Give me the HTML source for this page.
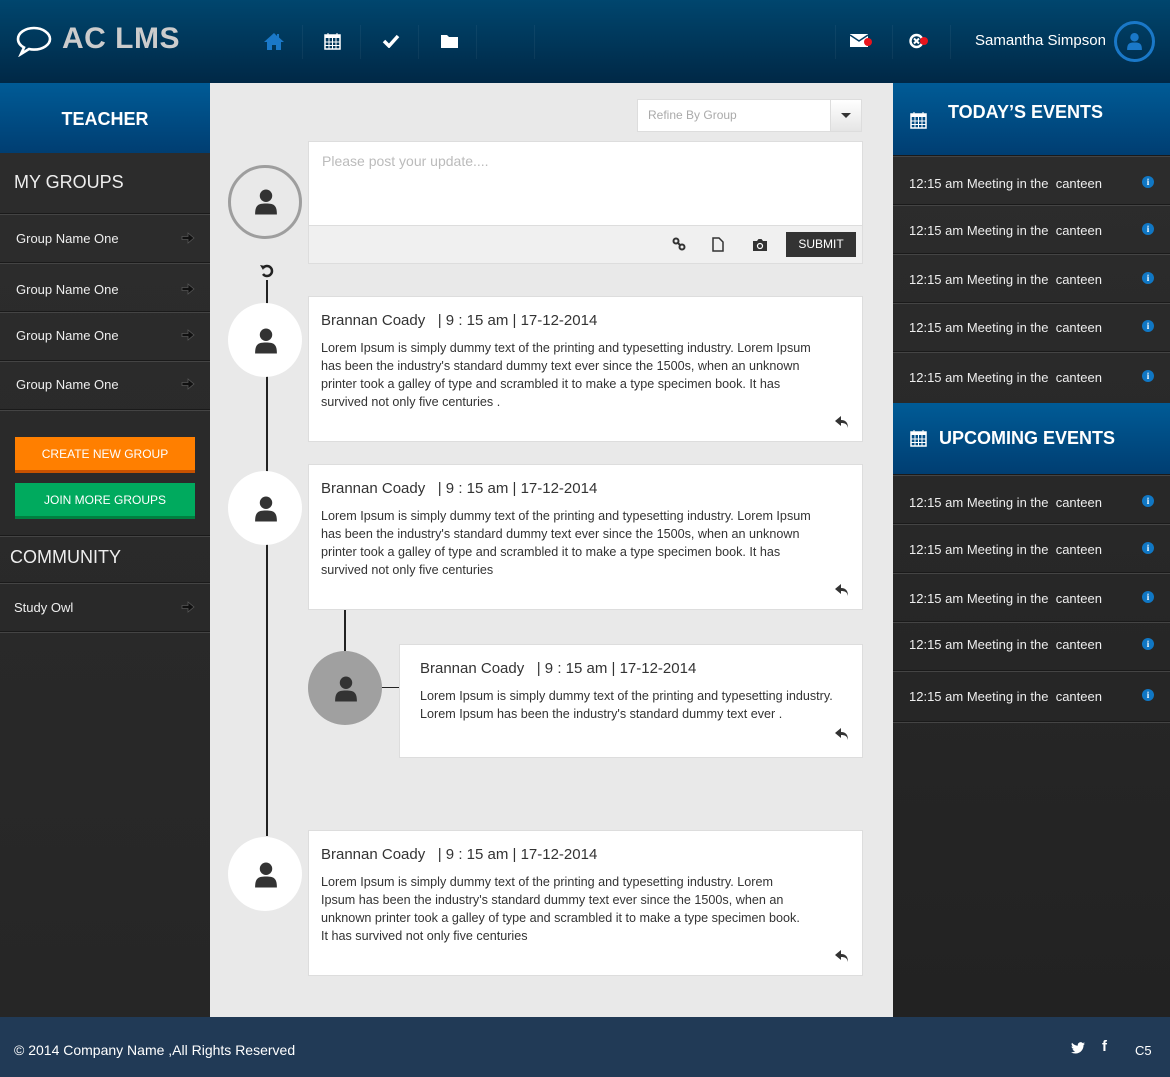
<!DOCTYPE html>
<html><head><meta charset="utf-8"><style>
*{margin:0;padding:0;box-sizing:border-box}
body{width:1170px;height:1077px;position:relative;overflow:hidden;font-family:"Liberation Sans",sans-serif;background:#e9e9e9}
.a{position:absolute}
#hdr{left:0;top:0;width:1170px;height:83px;background:linear-gradient(#00466e,#002846)}
.logo{left:62px;top:22px;font-size:30px;font-weight:bold;color:#ccc;letter-spacing:0.5px}
.nav{top:25px;width:58px;height:34px;border-right:1px solid rgba(255,255,255,0.05)}
#ls{left:0;top:83px;width:210px;height:934px;background:linear-gradient(#2d2d2d,#262626)}
.teach{left:0;top:83px;width:210px;height:70px;background:linear-gradient(#005b96,#003e72);color:#fff;font-weight:bold;font-size:18px;text-align:center;line-height:72px}
.sep{height:2px;background:#1a1a1a;border-bottom:1px solid #444;width:210px;left:0}
.gtxt{color:#eee;font-size:13px;left:16px}
.arr{left:181px}
.h2{color:#eee;font-size:18px}
.btn{left:15px;width:180px;height:36px;color:#fff;font-size:12px;text-align:center;line-height:34px}
#rs{left:893px;top:83px;width:277px;height:934px;background:linear-gradient(#2d2d2d,#222)}
.eh{left:893px;width:277px;background:linear-gradient(#005b96,#003e72);color:#fff;font-weight:bold;font-size:18px}
.rsep{left:893px;width:277px;height:2px;background:#1a1a1a;border-bottom:1px solid #444}
.ev{left:909px;color:#eee;font-size:13px}
.info{left:1142px;width:12px;height:12px;border-radius:50%;background:#1077c4;color:#fff;font-size:9px;font-weight:bold;text-align:center;line-height:12px;font-family:"Liberation Serif",serif}
.card{background:#fff;border:1px solid #ddd}
.nm{font-size:15px;color:#333}
.tx{font-size:12.6px;color:#333;line-height:18px;white-space:nowrap}
.av{width:74px;height:74px;border-radius:50%;background:#fff}
.rep{left:835px}
#ft{left:0;top:1017px;width:1170px;height:60px;background:#213a56;color:#fff}
</style></head><body>
<div id="hdr" class="a"></div>
<svg class="a" style="left:15px;top:25px" width="38" height="32" viewBox="0 0 38 32"><path d="M19 3C10 3 3 8 3 14c0 3.5 2.3 6.5 6 8.5L6 29l8-5c1.6.4 3.3.6 5 .6 9 0 16-5 16-10.6S28 3 19 3z" fill="none" stroke="#fff" stroke-width="2.6"/></svg>
<div class="a logo">AC LMS</div>
<div class="a nav" style="left:245px"></div><div class="a nav" style="left:303px"></div><div class="a nav" style="left:361px"></div><div class="a nav" style="left:419px"></div><div class="a nav" style="left:477px"></div>
<svg class="a" style="left:263px;top:32px" width="22" height="18" viewBox="0 0 22 18"><path d="M11 1L1 10h3v8h5v-5h4v5h5v-8h3L16 5.5V2h-2v2z" fill="#1a78c8"/></svg>
<svg class="a" style="left:324px;top:32px" width="17" height="18" viewBox="0 0 17 18"><rect x="1" y="3" width="15" height="14" fill="none" stroke="#fff" stroke-width="1.5"/><rect x="1" y="3" width="15" height="3" fill="#fff"/><path d="M4 1v4M13 1v4M1 10h15M1 13.5h15M5 6v11M8.5 6v11M12 6v11" stroke="#fff" stroke-width="1"/></svg>
<svg class="a" style="left:382px;top:34px" width="18" height="14" viewBox="0 0 18 14"><path d="M2 7l5 5L16 2" fill="none" stroke="#fff" stroke-width="3.5"/></svg>
<svg class="a" style="left:441px;top:34px" width="17" height="14" viewBox="0 0 17 14"><path d="M0 1h6l2 2h9v11H0z" fill="#fff"/></svg>
<div class="a nav" style="left:835px;border-left:1px solid rgba(255,255,255,0.05)"></div><div class="a nav" style="left:893px"></div>
<svg class="a" style="left:850px;top:34px" width="24" height="16" viewBox="0 0 24 16"><rect x="0" y="0" width="18" height="13" fill="#fff"/><path d="M0 1l9 6 9-6" stroke="#003a60" stroke-width="1.5" fill="none"/><circle cx="18" cy="8" r="4" fill="#e8141c"/></svg>
<svg class="a" style="left:909px;top:33px" width="24" height="16" viewBox="0 0 24 16"><circle cx="7.5" cy="8" r="6" fill="none" stroke="#fff" stroke-width="2.4"/><path d="M5 5.5l5 5M10 5.5l-5 5" stroke="#fff" stroke-width="2"/><circle cx="15" cy="8" r="4" fill="#e8141c"/></svg>
<div class="a" style="left:975px;top:32px;color:#fff;font-size:15px">Samantha Simpson</div>
<div class="a" style="left:1114px;top:21px;width:41px;height:41px;border:3px solid #1a78c8;border-radius:50%"></div>
<svg class="a" style="left:1126px;top:32px" width="17" height="19" viewBox="0 0 16 18"><circle cx="8" cy="5" r="4" fill="#1a78c8"/><path d="M1 17c0-6 2-7 7-7s7 1 7 7z" fill="#1a78c8"/></svg>

<div id="ls" class="a"></div>
<div class="a teach">TEACHER</div>
<div class="a h2" style="left:14px;top:172px">MY GROUPS</div>
<div class="a sep" style="top:213px"></div>
<div class="a gtxt" style="top:231px">Group Name One</div>
<div class="a sep" style="top:262px"></div>
<div class="a gtxt" style="top:282px">Group Name One</div>
<div class="a sep" style="top:311px"></div>
<div class="a gtxt" style="top:328px">Group Name One</div>
<div class="a sep" style="top:360px"></div>
<div class="a gtxt" style="top:377px">Group Name One</div>
<div class="a sep" style="top:409px"></div>
<svg class="a arr" style="top:232px" width="14" height="12" viewBox="0 0 14 12"><path d="M1 4.5h6V1l6 5-6 5V7.5H1z" fill="#111" stroke="#555" stroke-width="0.8"/></svg>
<svg class="a arr" style="top:283px" width="14" height="12" viewBox="0 0 14 12"><path d="M1 4.5h6V1l6 5-6 5V7.5H1z" fill="#111" stroke="#555" stroke-width="0.8"/></svg>
<svg class="a arr" style="top:329px" width="14" height="12" viewBox="0 0 14 12"><path d="M1 4.5h6V1l6 5-6 5V7.5H1z" fill="#111" stroke="#555" stroke-width="0.8"/></svg>
<svg class="a arr" style="top:378px" width="14" height="12" viewBox="0 0 14 12"><path d="M1 4.5h6V1l6 5-6 5V7.5H1z" fill="#111" stroke="#555" stroke-width="0.8"/></svg>
<div class="a btn" style="top:437px;background:#ff7f00;border-bottom:3px solid #c85200">CREATE NEW GROUP</div>
<div class="a btn" style="top:483px;background:#00aa5e;border-bottom:3px solid #008040">JOIN MORE GROUPS</div>
<div class="a sep" style="top:535px"></div>
<div class="a h2" style="left:10px;top:547px">COMMUNITY</div>
<div class="a sep" style="top:582px"></div>
<div class="a gtxt" style="left:14px;top:600px">Study Owl</div>
<svg class="a arr" style="top:601px" width="14" height="12" viewBox="0 0 14 12"><path d="M1 4.5h6V1l6 5-6 5V7.5H1z" fill="#111" stroke="#555" stroke-width="0.8"/></svg>
<div class="a sep" style="top:631px"></div>

<div id="rs" class="a"></div>
<div class="a eh" style="top:83px;height:72px"></div>
<div class="a" style="left:948px;top:102px;color:#fff;font-weight:bold;font-size:18px">TODAY’S EVENTS</div>
<svg class="a" style="left:910px;top:111px" width="17" height="18" viewBox="0 0 17 18"><rect x="1" y="3" width="15" height="14" fill="none" stroke="#fff" stroke-width="1.5"/><rect x="1" y="3" width="15" height="3" fill="#fff"/><path d="M4 1v4M13 1v4M1 10h15M1 13.5h15M5 6v11M8.5 6v11M12 6v11" stroke="#fff" stroke-width="1"/></svg>
<div class="a rsep" style="top:155px"></div>
<div class="a ev" style="top:176px">12:15 am Meeting in the&nbsp; canteen</div><div class="a info" style="top:176px">i</div>
<div class="a rsep" style="top:204px"></div>
<div class="a ev" style="top:223px">12:15 am Meeting in the&nbsp; canteen</div><div class="a info" style="top:223px">i</div>
<div class="a rsep" style="top:253px"></div>
<div class="a ev" style="top:272px">12:15 am Meeting in the&nbsp; canteen</div><div class="a info" style="top:272px">i</div>
<div class="a rsep" style="top:302px"></div>
<div class="a ev" style="top:320px">12:15 am Meeting in the&nbsp; canteen</div><div class="a info" style="top:320px">i</div>
<div class="a rsep" style="top:351px"></div>
<div class="a ev" style="top:370px">12:15 am Meeting in the&nbsp; canteen</div><div class="a info" style="top:370px">i</div>
<div class="a eh" style="top:403px;height:71px"></div>
<svg class="a" style="left:910px;top:429px" width="17" height="18" viewBox="0 0 17 18"><rect x="1" y="3" width="15" height="14" fill="none" stroke="#fff" stroke-width="1.5"/><rect x="1" y="3" width="15" height="3" fill="#fff"/><path d="M4 1v4M13 1v4M1 10h15M1 13.5h15M5 6v11M8.5 6v11M12 6v11" stroke="#fff" stroke-width="1"/></svg>
<div class="a" style="left:939px;top:428px;color:#fff;font-weight:bold;font-size:18px">UPCOMING EVENTS</div>
<div class="a rsep" style="top:474px"></div>
<div class="a ev" style="top:495px">12:15 am Meeting in the&nbsp; canteen</div><div class="a info" style="top:495px">i</div>
<div class="a rsep" style="top:523px"></div>
<div class="a ev" style="top:542px">12:15 am Meeting in the&nbsp; canteen</div><div class="a info" style="top:542px">i</div>
<div class="a rsep" style="top:572px"></div>
<div class="a ev" style="top:591px">12:15 am Meeting in the&nbsp; canteen</div><div class="a info" style="top:591px">i</div>
<div class="a rsep" style="top:621px"></div>
<div class="a ev" style="top:637px">12:15 am Meeting in the&nbsp; canteen</div><div class="a info" style="top:638px">i</div>
<div class="a rsep" style="top:670px"></div>
<div class="a ev" style="top:689px">12:15 am Meeting in the&nbsp; canteen</div><div class="a info" style="top:689px">i</div>
<div class="a rsep" style="top:721px"></div>

<!-- main -->
<div class="a" style="left:637px;top:99px;width:225px;height:33px;background:#fff;border:1px solid #ddd"></div>
<div class="a" style="left:648px;top:108px;font-size:12px;color:#aaa">Refine By Group</div>
<div class="a" style="left:830px;top:99px;width:32px;height:33px;background:linear-gradient(#fff,#e5e5e5);border:1px solid #ddd"></div>
<div class="a" style="left:841px;top:113px;border-left:5px solid transparent;border-right:5px solid transparent;border-top:5px solid #333"></div>

<div class="a card" style="left:308px;top:141px;width:555px;height:123px"></div>
<div class="a" style="left:322px;top:153px;font-size:14px;color:#bbb">Please post your update....</div>
<div class="a" style="left:309px;top:225px;width:553px;height:38px;background:#f0f0f0;border-top:1px solid #ddd"></div>
<div class="a" style="left:786px;top:232px;width:70px;height:25px;background:#333;color:#fff;font-size:12px;text-align:center;line-height:25px">SUBMIT</div>
<svg class="a" style="left:672px;top:237px" width="14" height="14" viewBox="0 0 14 14"><circle cx="4" cy="4" r="2.5" fill="none" stroke="#333" stroke-width="2"/><circle cx="10" cy="10" r="2.5" fill="none" stroke="#333" stroke-width="2"/><path d="M5.5 5.5l3 3" stroke="#333" stroke-width="2"/></svg>
<svg class="a" style="left:712px;top:237px" width="12" height="15" viewBox="0 0 12 15"><path d="M1 1h6l4 4v9H1z" fill="none" stroke="#333" stroke-width="1.5"/></svg>
<svg class="a" style="left:752px;top:238px" width="16" height="13" viewBox="0 0 16 13"><path d="M1 3h4l1.5-2h3L11 3h4v10H1z" fill="#333"/><circle cx="8" cy="8" r="2.5" fill="none" stroke="#fff" stroke-width="1.2"/></svg>

<div class="a" style="left:228px;top:165px;width:74px;height:74px;border:3px solid #9e9e9e;border-radius:50%"></div>
<svg class="a" style="left:253px;top:188px" width="26" height="28" viewBox="0 0 16 18"><circle cx="8" cy="5" r="4" fill="#333"/><path d="M1 17c0-6 2-7 7-7s7 1 7 7z" fill="#333"/></svg>
<svg class="a" style="left:259px;top:263px" width="16" height="16" viewBox="0 0 16 16"><path d="M4 5a5 5 0 1 1 0 6" fill="none" stroke="#222" stroke-width="2.5"/><path d="M1 2l5 1-2 4z" fill="#222"/></svg>
<div class="a" style="left:266px;top:280px;width:2px;height:556px;background:#222"></div>

<!-- card 1 -->
<div class="a card" style="left:308px;top:296px;width:555px;height:146px"></div>
<div class="a av" style="left:228px;top:303px"></div>
<svg class="a" style="left:253px;top:327px" width="26" height="28" viewBox="0 0 16 18"><circle cx="8" cy="5" r="4" fill="#333"/><path d="M1 17c0-6 2-7 7-7s7 1 7 7z" fill="#333"/></svg>
<div class="a nm" style="left:321px;top:312px">Brannan Coady &nbsp; | 9 : 15 am | 17-12-2014</div>
<div class="a tx" style="left:321px;top:339px">Lorem Ipsum is simply dummy text of the printing and typesetting industry. Lorem Ipsum<br>has been the industry's standard dummy text ever since the 1500s, when an unknown<br>printer took a galley of type and scrambled it to make a type specimen book. It has<br>survived not only five centuries .</div>
<svg class="a rep" style="top:416px" width="14" height="12" viewBox="0 0 14 12"><path d="M6 0L0 5l6 5V7c4 0 6 1 7 5 0-5-2-8-7-8z" fill="#333"/></svg>

<!-- card 2 -->
<div class="a card" style="left:308px;top:464px;width:555px;height:146px"></div>
<div class="a av" style="left:228px;top:471px"></div>
<svg class="a" style="left:253px;top:495px" width="26" height="28" viewBox="0 0 16 18"><circle cx="8" cy="5" r="4" fill="#333"/><path d="M1 17c0-6 2-7 7-7s7 1 7 7z" fill="#333"/></svg>
<div class="a nm" style="left:321px;top:480px">Brannan Coady &nbsp; | 9 : 15 am | 17-12-2014</div>
<div class="a tx" style="left:321px;top:507px">Lorem Ipsum is simply dummy text of the printing and typesetting industry. Lorem Ipsum<br>has been the industry's standard dummy text ever since the 1500s, when an unknown<br>printer took a galley of type and scrambled it to make a type specimen book. It has<br>survived not only five centuries</div>
<svg class="a rep" style="top:584px" width="14" height="12" viewBox="0 0 14 12"><path d="M6 0L0 5l6 5V7c4 0 6 1 7 5 0-5-2-8-7-8z" fill="#333"/></svg>

<!-- nested -->
<div class="a" style="left:344px;top:610px;width:2px;height:42px;background:#222"></div>
<div class="a" style="left:380px;top:687px;width:20px;height:1px;background:#222"></div>
<div class="a card" style="left:399px;top:644px;width:464px;height:114px"></div>
<div class="a av" style="left:308px;top:651px;background:#a0a0a0"></div>
<svg class="a" style="left:333px;top:675px" width="26" height="28" viewBox="0 0 16 18"><circle cx="8" cy="5" r="4" fill="#333"/><path d="M1 17c0-6 2-7 7-7s7 1 7 7z" fill="#333"/></svg>
<div class="a nm" style="left:420px;top:660px">Brannan Coady &nbsp; | 9 : 15 am | 17-12-2014</div>
<div class="a tx" style="left:420px;top:687px">Lorem Ipsum is simply dummy text of the printing and typesetting industry.<br>Lorem Ipsum has been the industry's standard dummy text ever .</div>
<svg class="a rep" style="top:728px" width="14" height="12" viewBox="0 0 14 12"><path d="M6 0L0 5l6 5V7c4 0 6 1 7 5 0-5-2-8-7-8z" fill="#333"/></svg>

<!-- card 4 -->
<div class="a card" style="left:308px;top:830px;width:555px;height:146px"></div>
<div class="a av" style="left:228px;top:837px"></div>
<svg class="a" style="left:253px;top:861px" width="26" height="28" viewBox="0 0 16 18"><circle cx="8" cy="5" r="4" fill="#333"/><path d="M1 17c0-6 2-7 7-7s7 1 7 7z" fill="#333"/></svg>
<div class="a nm" style="left:321px;top:846px">Brannan Coady &nbsp; | 9 : 15 am | 17-12-2014</div>
<div class="a tx" style="left:321px;top:873px">Lorem Ipsum is simply dummy text of the printing and typesetting industry. Lorem<br>Ipsum has been the industry's standard dummy text ever since the 1500s, when an<br>unknown printer took a galley of type and scrambled it to make a type specimen book.<br>It has survived not only five centuries</div>
<svg class="a rep" style="top:950px" width="14" height="12" viewBox="0 0 14 12"><path d="M6 0L0 5l6 5V7c4 0 6 1 7 5 0-5-2-8-7-8z" fill="#333"/></svg>

<div id="ft" class="a"></div>
<div class="a" style="left:14px;top:1042px;color:#fff;font-size:14px">© 2014 Company Name ,All Rights Reserved</div>
<svg class="a" style="left:1071px;top:1042px" width="14" height="12" viewBox="0 0 24 20"><path d="M24 2.4a10 10 0 0 1-2.8.8A5 5 0 0 0 23.3.4a10 10 0 0 1-3.1 1.2A4.9 4.9 0 0 0 11.8 6 14 14 0 0 1 1.7.9a4.9 4.9 0 0 0 1.5 6.6A4.9 4.9 0 0 1 1 6.9 4.9 4.9 0 0 0 4.9 11.8a5 5 0 0 1-2.2.1 4.9 4.9 0 0 0 4.6 3.4A9.9 9.9 0 0 1 0 17.3 14 14 0 0 0 7.5 19.5c9.1 0 14-7.5 14-14v-.6A10 10 0 0 0 24 2.4z" fill="#fff"/></svg>
<div class="a" style="left:1102px;top:1038px;color:#fff;font-size:15px;font-weight:bold">f</div>
<div class="a" style="left:1135px;top:1043px;color:#fff;font-size:13px">C5</div>
</body></html>
